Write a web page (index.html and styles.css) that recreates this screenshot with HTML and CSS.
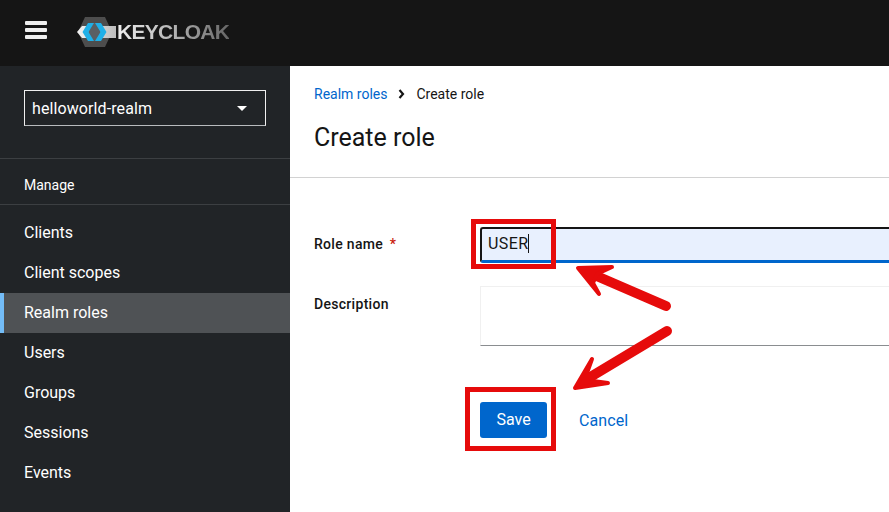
FILE: index.html
```html
<!DOCTYPE html>
<html>
<head>
  <title>Keycloak - Create role</title>
  <link rel="stylesheet" href="styles.css">
</head>
<body>
  <header class="topbar">
    <button class="burger" aria-label="Menu"><span></span><span></span><span></span></button>
    <div class="logo">
      <svg class="logo-mark" width="42" height="32" viewBox="0 0 42 32">
        <defs>
          <linearGradient id="hexfill" x1="0" x2="1" y1="0" y2="0">
            <stop offset="0" stop-color="#f2f2f2"/>
            <stop offset="1" stop-color="#bdbdbd"/>
          </linearGradient>
        </defs>
        <polygon points="10,1 30,1 37,16 30,31 10,31 3,16" fill="#4d4d4d"/>
        <polygon points="2,16 7,10 41,10 41,22 7,22" fill="url(#hexfill)"/>
        <polygon points="17,7 22,7 26,16 22,25 17,25 13,16" fill="#5a5f63"/>
        <polygon points="19,7 13,7 7.500,16 13,25 19,25 13.500,16" fill="#1fb0e8"/>
        <polygon points="20,7 26,7 31.500,16 26,25 20,25 25.500,16" fill="#1fb0e8"/>
      </svg>
      <span class="logo-text">KEYCLOAK</span>
    </div>
  </header>

  <div class="layout">
    <aside class="sidebar">
      <div class="realm-wrap">
        <div class="realm-select">
          <span>helloworld-realm</span>
          <span class="caret"></span>
        </div>
      </div>
      <div class="nav-title">Manage</div>
      <nav class="nav">
        <a>Clients</a>
        <a>Client scopes</a>
        <a class="current">Realm roles</a>
        <a>Users</a>
        <a>Groups</a>
        <a>Sessions</a>
        <a>Events</a>
      </nav>
    </aside>

    <main class="main">
      <section class="page-head">
        <div class="crumbs">
          <a>Realm roles</a>
          <svg class="crumb-sep" width="7" height="10" viewBox="0 0 7 10"><path d="M1.500 1 L5 5 L1.500 9" fill="none" stroke="#151515" stroke-width="2.200"/></svg>
          <span>Create role</span>
        </div>
        <h1>Create role</h1>
      </section>

      <form class="form">
        <label class="field-label role-label">Role name <span class="req">*</span></label>
        <div class="role-input"><span class="typed">USER</span></div>

        <label class="field-label desc-label">Description</label>
        <div class="desc-input"></div>

        <div class="actions">
          <button type="button" class="save">Save</button>
          <a class="cancel">Cancel</a>
        </div>
      </form>
    </main>
  </div>

  <!-- annotations drawn on top of the screenshot -->
  <svg class="marks" width="889" height="512" viewBox="0 0 889 512">
    <g fill="none" stroke="#e60b0b" stroke-width="5">
      <rect x="473.5" y="221.5" width="80" height="45"/>
      <rect x="467.5" y="389.5" width="86" height="59"/>
    </g>
    <g fill="#e60b0b" stroke="#e60b0b" stroke-linejoin="round" stroke-linecap="round">
      <path d="M666 306 L592 274" fill="none" stroke-width="10"/>
      <polygon points="578,268 612,267 597,274 593,283 599,294" stroke-width="4"/>
      <path d="M667 331 L592 376" fill="none" stroke-width="10"/>
      <polygon points="575,388 592,359 587,373 593,381 608,383" stroke-width="4"/>
    </g>
  </svg>
</body>
</html>
```

FILE: styles.css
```css
* { box-sizing: border-box; }
html, body { margin: 0; height: 100%; }
body { width: 889px; height: 512px; overflow: hidden; position: relative; font-family: Roboto, "Noto Sans", sans-serif; font-size: 14px; color: #151515; background: white; }

.topbar { height: 66px; background: #151515; display: flex; align-items: center; padding-left: 25px; }
.burger { width: 22px; height: 18px; padding: 0; border: none; background: none; display: flex; flex-direction: column; justify-content: space-between; margin-right: 28px; margin-top: -7px; }
.burger span { display: block; height: 4px; background: #eee; border-radius: 1px; }
.logo { display: flex; align-items: center; margin-top: -2px; }
.logo-mark { display: block; }
.logo-text { font-family: "Liberation Sans", Arial, sans-serif; font-weight: 700; font-size: 21px; letter-spacing: -0.7px; background: linear-gradient(90deg, #eee, #bbb 45%, #666); -webkit-background-clip: text; background-clip: text; color: transparent; }

.layout { display: flex; height: 446px; }

.sidebar { width: 290px; flex: none; background: #212427; color: white; }
.realm-wrap { padding: 24px 24px 32px; border-bottom: 1px solid #3c3f42; }
.realm-select { height: 36px; border: 1px solid #f0f0f0; border-bottom-color: #b8bbbe; display: flex; align-items: center; justify-content: space-between; padding: 0 18px 0 7px; font-size: 16px; letter-spacing: 0.1px; }
.caret { width: 0; height: 0; border-left: 5px solid transparent; border-right: 5px solid transparent; border-top: 5px solid white; }
.nav-title { height: 46px; padding: 17px 24px 0; font-size: 14px; line-height: 18px; border-bottom: 1px solid #3c3f42; }
.nav { padding-top: 8px; }
.nav a { display: block; height: 40px; line-height: 40px; padding-left: 24px; font-size: 16px; }
.nav a.current { background: #4f5255; border-left: 4px solid #73bcf7; padding-left: 20px; }

.main { flex: 1; min-width: 0; }
.page-head { height: 112px; padding: 19px 24px 0; border-bottom: 1px solid #d2d2d2; }
.crumbs { display: flex; align-items: center; height: 18px; font-size: 14px; }
.crumbs a { color: #06c; }
.crumb-sep { margin: 0 11px 0 11px; }
h1 { margin: 17px 0 0; font-size: 25px; font-weight: 400; line-height: 36px; }

.form { display: grid; grid-template-columns: 166px 1fr; padding: 49px 0 0 24px; }
.field-label { font-size: 14px; font-weight: 500; letter-spacing: 0.3px; }
.role-label { line-height: 34px; }
.req { color: #c9190b; margin-left: 3px; }
.role-input { height: 36px; background: #e8f0fe; border: 2px solid #151515; border-right: none; border-bottom: 3px solid #06c; border-radius: 3px 0 0 3px; padding-left: 6px; font-size: 16px; line-height: 30px; letter-spacing: 0.4px; margin-right: -24px; }
.typed { border-right: 1px solid #151515; }
.desc-label { margin-top: 24px; line-height: 34px; }
.desc-input { height: 60px; margin-top: 23px; border: 1px solid #f0f0f0; border-bottom-color: #8a8d90; border-right: none; }
.actions { grid-column: 2; display: flex; align-items: center; margin-top: 56px; }
.save { width: 67px; height: 36px; border: none; border-radius: 3px; background: #06c; color: white; font: inherit; font-size: 16px; padding: 0 0 1px; }
.cancel { margin-left: 32px; color: #06c; font-size: 16px; letter-spacing: 0.1px; }

.marks { position: absolute; left: 0; top: 0; pointer-events: none; }
```
